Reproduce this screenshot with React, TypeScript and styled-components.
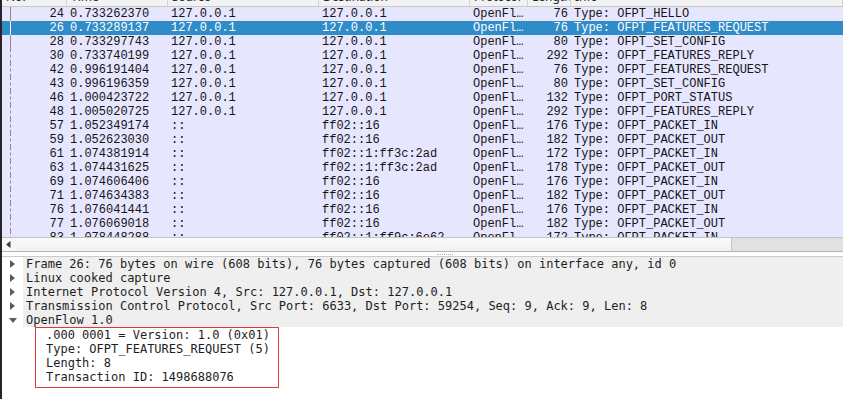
import styled, { createGlobalStyle } from "styled-components";

type T_Packet = {
  no: number;
  time: string;
  src: string;
  dst: string;
  len: number;
  info: string;
};

const packets: T_Packet[] = [
  { no: 24, time: "0.733262370", src: "127.0.0.1", dst: "127.0.0.1", len: 76, info: "Type: OFPT_HELLO" },
  { no: 26, time: "0.733289137", src: "127.0.0.1", dst: "127.0.0.1", len: 76, info: "Type: OFPT_FEATURES_REQUEST" },
  { no: 28, time: "0.733297743", src: "127.0.0.1", dst: "127.0.0.1", len: 80, info: "Type: OFPT_SET_CONFIG" },
  { no: 30, time: "0.733740199", src: "127.0.0.1", dst: "127.0.0.1", len: 292, info: "Type: OFPT_FEATURES_REPLY" },
  { no: 42, time: "0.996191404", src: "127.0.0.1", dst: "127.0.0.1", len: 76, info: "Type: OFPT_FEATURES_REQUEST" },
  { no: 43, time: "0.996196359", src: "127.0.0.1", dst: "127.0.0.1", len: 80, info: "Type: OFPT_SET_CONFIG" },
  { no: 46, time: "1.000423722", src: "127.0.0.1", dst: "127.0.0.1", len: 132, info: "Type: OFPT_PORT_STATUS" },
  { no: 48, time: "1.005020725", src: "127.0.0.1", dst: "127.0.0.1", len: 292, info: "Type: OFPT_FEATURES_REPLY" },
  { no: 57, time: "1.052349174", src: "::", dst: "ff02::16", len: 176, info: "Type: OFPT_PACKET_IN" },
  { no: 59, time: "1.052623030", src: "::", dst: "ff02::16", len: 182, info: "Type: OFPT_PACKET_OUT" },
  { no: 61, time: "1.074381914", src: "::", dst: "ff02::1:ff3c:2ad", len: 172, info: "Type: OFPT_PACKET_IN" },
  { no: 63, time: "1.074431625", src: "::", dst: "ff02::1:ff3c:2ad", len: 178, info: "Type: OFPT_PACKET_OUT" },
  { no: 69, time: "1.074606406", src: "::", dst: "ff02::16", len: 176, info: "Type: OFPT_PACKET_IN" },
  { no: 71, time: "1.074634383", src: "::", dst: "ff02::16", len: 182, info: "Type: OFPT_PACKET_OUT" },
  { no: 76, time: "1.076041441", src: "::", dst: "ff02::16", len: 176, info: "Type: OFPT_PACKET_IN" },
  { no: 77, time: "1.076069018", src: "::", dst: "ff02::16", len: 182, info: "Type: OFPT_PACKET_OUT" },
  { no: 83, time: "1.078448288", src: "::", dst: "ff02::1:ff9c:6e62", len: 172, info: "Type: OFPT_PACKET_IN" },
];

const SELECTED = 26;

const topLevel = [
  "Frame 26: 76 bytes on wire (608 bits), 76 bytes captured (608 bits) on interface any, id 0",
  "Linux cooked capture",
  "Internet Protocol Version 4, Src: 127.0.0.1, Dst: 127.0.0.1",
  "Transmission Control Protocol, Src Port: 6633, Dst Port: 59254, Seq: 9, Ack: 9, Len: 8",
];

const openflowFields = [
  ".000 0001 = Version: 1.0 (0x01)",
  "Type: OFPT_FEATURES_REQUEST (5)",
  "Length: 8",
  "Transaction ID: 1498688076",
];

const COLUMNS = "65px 101px 151px 151px 58px 43px 1fr";

export default function App() {
  return (
    <>
      <GlobalStyle />
      <Screen>
        <Window>
          <ListHeader>
            {["No.", "Time", "Source", "Destination", "Protocol", "Length", "Info"].map((h) => (
              <HeaderCell key={h}>
                <HeaderLabel>{h}</HeaderLabel>
              </HeaderCell>
            ))}
          </ListHeader>
          <ListBody>
            {packets.map((p, i) => {
              const selected = p.no === SELECTED;
              return (
                <PacketRow key={p.no} $selected={selected}>
                  <NoCell>
                    <Related $dashed={i > 2} $selected={selected} />
                    <NoText>{p.no}</NoText>
                  </NoCell>
                  <Cell>{p.time}</Cell>
                  <Cell>{p.src}</Cell>
                  <Cell>{p.dst}</Cell>
                  <Cell>OpenFl…</Cell>
                  <Cell $right>{p.len}</Cell>
                  <Cell>{p.info}</Cell>
                </PacketRow>
              );
            })}
          </ListBody>
          <HScroll>
            <ScrollButton>
              <svg width="5" height="7" viewBox="0 0 5 7">
                <path d="M4.5 0 L0 3.5 L4.5 7 Z" fill="#3a3a3a" />
              </svg>
            </ScrollButton>
            <ScrollThumb />
            <ScrollTrack />
          </HScroll>
          <Splitter>
            <Grip />
          </Splitter>
          <DetailPane>
            {topLevel.map((t) => (
              <TreeRow key={t}>
                <Expander>
                  <svg width="5" height="8" viewBox="0 0 5 8">
                    <path d="M0 0 L5 4 L0 8 Z" fill="#5c5c5c" />
                  </svg>
                </Expander>
                <TreeText>{t}</TreeText>
              </TreeRow>
            ))}
            <TreeRow>
              <Expander>
                <svg width="8" height="5" viewBox="0 0 8 5">
                  <path d="M0 0 L8 0 L4 5 Z" fill="#5c5c5c" />
                </svg>
              </Expander>
              <TreeText>OpenFlow 1.0</TreeText>
            </TreeRow>
            <Highlight>
              {openflowFields.map((f) => (
                <FieldRow key={f}>{f}</FieldRow>
              ))}
            </Highlight>
          </DetailPane>
        </Window>
      </Screen>
    </>
  );
}

const GlobalStyle = createGlobalStyle`
  html, body {
    margin: 0;
    padding: 0;
    background: #ffffff;
    overflow: hidden;
  }
`;

const Screen = styled.div`
  width: 843px;
  height: 399px;
  display: flex;
  border-left: 2px solid #2b2129;
  box-sizing: border-box;
  overflow: hidden;
`;

const Window = styled.div`
  flex: 1;
  display: flex;
  flex-flow: column nowrap;
  min-width: 0;
  background: #ffffff;
`;

const ListHeader = styled.div`
  height: 7px;
  display: grid;
  grid-template-columns: ${COLUMNS};
  background: #f2f2f2;
  border-bottom: 1px solid #c9c9c9;
  box-sizing: border-box;
  overflow: hidden;
`;

const HeaderCell = styled.div`
  border-right: 1px solid #d2d2d2;
  padding-left: 4px;
  overflow: hidden;
  white-space: nowrap;
`;

const HeaderLabel = styled.div`
  margin-top: -10px;
  font-family: "Noto Sans", "DejaVu Sans", sans-serif;
  font-size: 12px;
  line-height: 14px;
  color: #2a2a2a;
`;

const ListBody = styled.div`
  height: 230px;
  overflow: hidden;
  background: #e7e6ff;
`;

const PacketRow = styled.div<{ $selected: boolean }>`
  height: 14px;
  display: grid;
  grid-template-columns: ${COLUMNS};
  background: ${(p) => (p.$selected ? "#308cc6" : "#e7e6ff")};
  color: ${(p) => (p.$selected ? "#ffffff" : "#141414")};
  font-family: "Liberation Mono", "DejaVu Sans Mono", monospace;
  font-size: 12px;
  line-height: 14px;
`;

const Cell = styled.div<{ $right?: boolean }>`
  padding: 0 3px;
  white-space: nowrap;
  overflow: hidden;
  text-align: ${(p) => (p.$right ? "right" : "left")};
`;

const NoCell = styled.div`
  display: flex;
  align-items: stretch;
`;

const Related = styled.span<{ $dashed: boolean; $selected: boolean }>`
  margin-left: 8px;
  width: 0;
  border-left: 1px ${(p) => (p.$dashed ? "dashed" : "solid")}
    ${(p) => (p.$selected ? "#ffffff" : "#8a8a8a")};
`;

const NoText = styled.span`
  flex: 1;
  text-align: right;
  padding-right: 3px;
`;

const HScroll = styled.div`
  height: 15px;
  display: flex;
  box-sizing: border-box;
  border-top: 1px solid #c2c2c2;
  border-bottom: 1px solid #b4b4b4;
  background: #dedede;
`;

const ScrollButton = styled.div`
  width: 13px;
  display: flex;
  align-items: center;
  justify-content: center;
  background: #f7f7f7;
`;

const ScrollThumb = styled.div`
  width: 716px;
  background: linear-gradient(#fbfbfb, #f1f1f1);
  border-right: 1px solid #c4c4c4;
`;

const ScrollTrack = styled.div`
  flex: 1;
  background: #e1e1e1;
`;

const Splitter = styled.div`
  height: 4px;
  display: flex;
  align-items: center;
  padding-left: 435px;
  background: #ffffff;
`;

const Grip = styled.div`
  width: 16px;
  border-top: 1px dotted #b0b0b0;
`;

const DetailPane = styled.div`
  flex: 1;
  border-top: 1px solid #cbcbcb;
  font-family: "DejaVu Sans Mono", "Liberation Mono", monospace;
  font-size: 12px;
  line-height: 14px;
  color: #1e1e1e;
`;

const TreeRow = styled.div`
  height: 14px;
  display: flex;
`;

const Expander = styled.div`
  width: 21px;
  display: flex;
  align-items: center;
  justify-content: center;
  background: #ffffff;
`;

const TreeText = styled.div`
  flex: 1;
  padding-left: 3px;
  background: #efefef;
  white-space: nowrap;
  overflow: hidden;
`;

const Highlight = styled.div`
  margin-left: 33px;
  width: 244px;
  height: 61px;
  box-sizing: border-box;
  border: 1px solid #e0393b;
  padding-left: 10px;
`;

const FieldRow = styled.div`
  height: 14px;
  white-space: nowrap;
`;
